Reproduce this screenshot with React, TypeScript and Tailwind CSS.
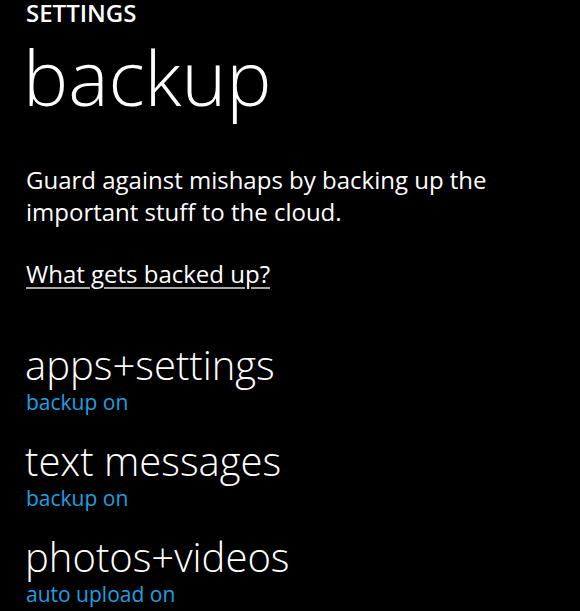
export default function App() {
  const items = [
    { title: 'apps+settings', status: 'backup on' },
    { title: 'text messages', status: 'backup on' },
    { title: 'photos+videos', status: 'auto upload on' },
  ];

  return (
    <div
      className="w-[580px] h-[611px] bg-black text-white overflow-hidden pl-[26px]"
      style={{ fontFamily: '"Open Sans", "Noto Sans", sans-serif' }}
    >
      <div className="text-[24px] leading-[25px] font-semibold">SETTINGS</div>
      <h1 className="text-[76px] leading-[104px] font-light ml-[-3px]">backup</h1>

      <p className="text-[24px] leading-[32px] mt-[35px]">
        Guard against mishaps by backing up the important stuff to the cloud.
      </p>
      <a className="block w-fit text-[24px] leading-[32px] mt-[30px] underline decoration-2 underline-offset-[4px] decoration-[#a8a8a8]">
        What gets backed up?
      </a>

      <div className="mt-[51px] flex flex-col gap-[22px]">
        {items.map((item) => (
          <div key={item.title}>
            <div className="text-[40px] leading-[48px] font-light ml-[-1px]">{item.title}</div>
            <div className="text-[21px] leading-[26px] text-[#1ba1e2]">{item.status}</div>
          </div>
        ))}
      </div>
    </div>
  );
}
